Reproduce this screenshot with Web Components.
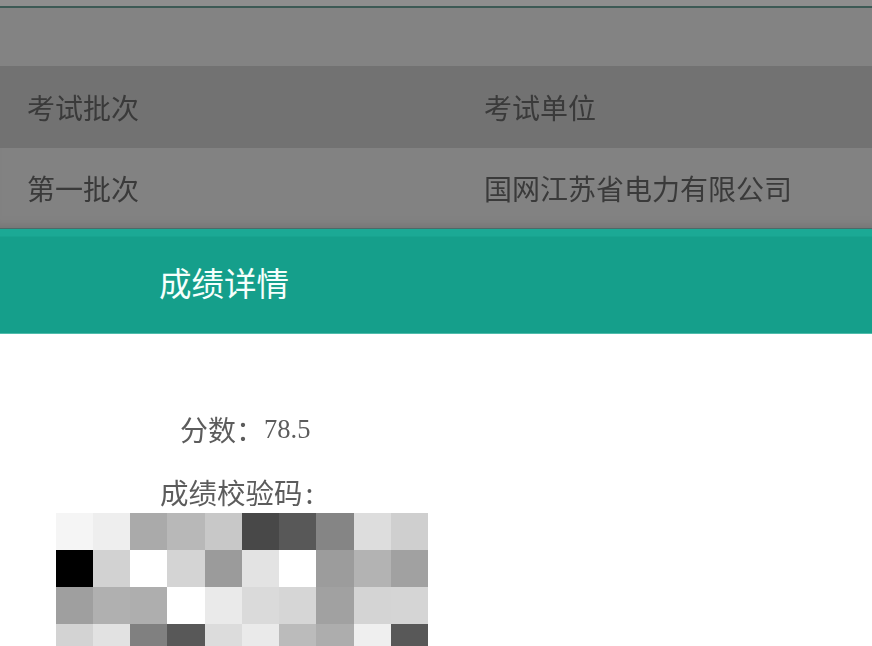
<!DOCTYPE html>
<html lang="zh">
<head>
<meta charset="utf-8">
<title>成绩详情</title>
<style>
  html, body { margin: 0; height: 646px; overflow: hidden; background: #fff; }
  body { font-family: "Noto Sans CJK SC", "Liberation Serif", serif; }
</style>
</head>
<body>
<exam-table></exam-table>
<detail-header>成绩详情</detail-header>
<score-panel score="78.5"></score-panel>

<script>
class ExamTable extends HTMLElement {
    constructor() {
        super();
        this.attachShadow({ mode: 'open' });
    }

    connectedCallback() {
        this.shadowRoot.innerHTML = `
            <style>
                :host {
                    display: block;
                    font-size: 28px;
                    color: #3a3a3a;
                }
                .strip { height: 6px; background: #8e8e8e; }
                .line { height: 2px; background: #3d5a55; }
                .blank { height: 58px; background: #838383; }
                .row {
                    display: grid;
                    grid-template-columns: 457px 1fr;
                    align-items: center;
                    padding-left: 27px;
                    line-height: 40px;
                }
                .row span { filter: blur(.3px); }
                .head { background: #727272; height: 82px; }
                .body { background: #828282; height: 80px; box-shadow: inset 0 -10px 8px -8px #737373; }
                .end { height: 1px; background: #4c6a68; }
            </style>
            <div class="strip"></div>
            <div class="line"></div>
            <div class="blank"></div>
            <div class="row head"><span>考试批次</span><span>考试单位</span></div>
            <div class="row body"><span>第一批次</span><span>国网江苏省电力有限公司</span></div>
            <div class="end"></div>
        `;
    }
}

class DetailHeader extends HTMLElement {
    constructor() {
        super();
        this.attachShadow({ mode: 'open' });
    }

    connectedCallback() {
        this.shadowRoot.innerHTML = `
            <style>
                :host {
                    display: block;
                    height: 105px;
                    box-sizing: border-box;
                    padding-left: 159px;
                    background: linear-gradient(#1ba995 0, #1ba995 7px, #159f8b 8px);
                    border-bottom: 1px solid #4fbcab;
                    color: #f6fffc;
                    font-size: 32.5px;
                    line-height: 106px;
                }
            </style>
            <slot></slot>
        `;
    }
}

class CheckGrid extends HTMLElement {
    cells = [
        'f5', 'ee', 'aa', 'b8', 'c8', '48', '58', '85', 'dd', 'cf',
        '00', 'd2', 'ff', 'd4', '9b', 'e3', 'ff', '9c', 'b3', 'a1',
        '9f', 'b0', 'ae', 'ff', 'ea', 'da', 'd6', 'a1', 'd4', 'd5',
        'd3', 'e2', '80', '58', 'dc', 'ea', 'bb', 'ad', 'ef', '58'
    ]

    constructor() {
        super();
        this.attachShadow({ mode: 'open' });
    }

    connectedCallback() {
        const cells = this.cells
            .map(c => `<i style="background:#${c}${c}${c}"></i>`)
            .join('');
        this.shadowRoot.innerHTML = `
            <style>
                :host {
                    display: grid;
                    grid-template-columns: repeat(10, 37.25px);
                    grid-auto-rows: 37px;
                    width: max-content;
                }
            </style>
            ${cells}
        `;
    }
}

class ScorePanel extends HTMLElement {
    constructor() {
        super();
        this.attachShadow({ mode: 'open' });
    }

    connectedCallback() {
        this.shadowRoot.innerHTML = `
            <style>
                :host {
                    display: block;
                    color: #5c5c5c;
                    padding: 73px 0 0 55.5px;
                }
                .score {
                    padding-left: 124.5px;
                    font-size: 28px;
                    line-height: 44px;
                    filter: blur(.3px);
                }
                .score b {
                    font: 400 26.5px "Liberation Serif", serif;
                    vertical-align: 3px;
                }
                .code {
                    padding-left: 104.5px;
                    font-size: 28.5px;
                    line-height: 44px;
                    margin-top: 19px;
                    white-space: nowrap;
                    filter: blur(.3px);
                }
                .code span { margin-left: 3px; }
                check-grid { margin-top: -1px; }
            </style>
            <div class="score">分数：<b>${this.getAttribute('score')}</b></div>
            <div class="code">成绩校验码<span>:</span></div>
            <check-grid></check-grid>
        `;
    }
}

customElements.define('exam-table', ExamTable);
customElements.define('detail-header', DetailHeader);
customElements.define('check-grid', CheckGrid);
customElements.define('score-panel', ScorePanel);
</script>
</body>
</html>
